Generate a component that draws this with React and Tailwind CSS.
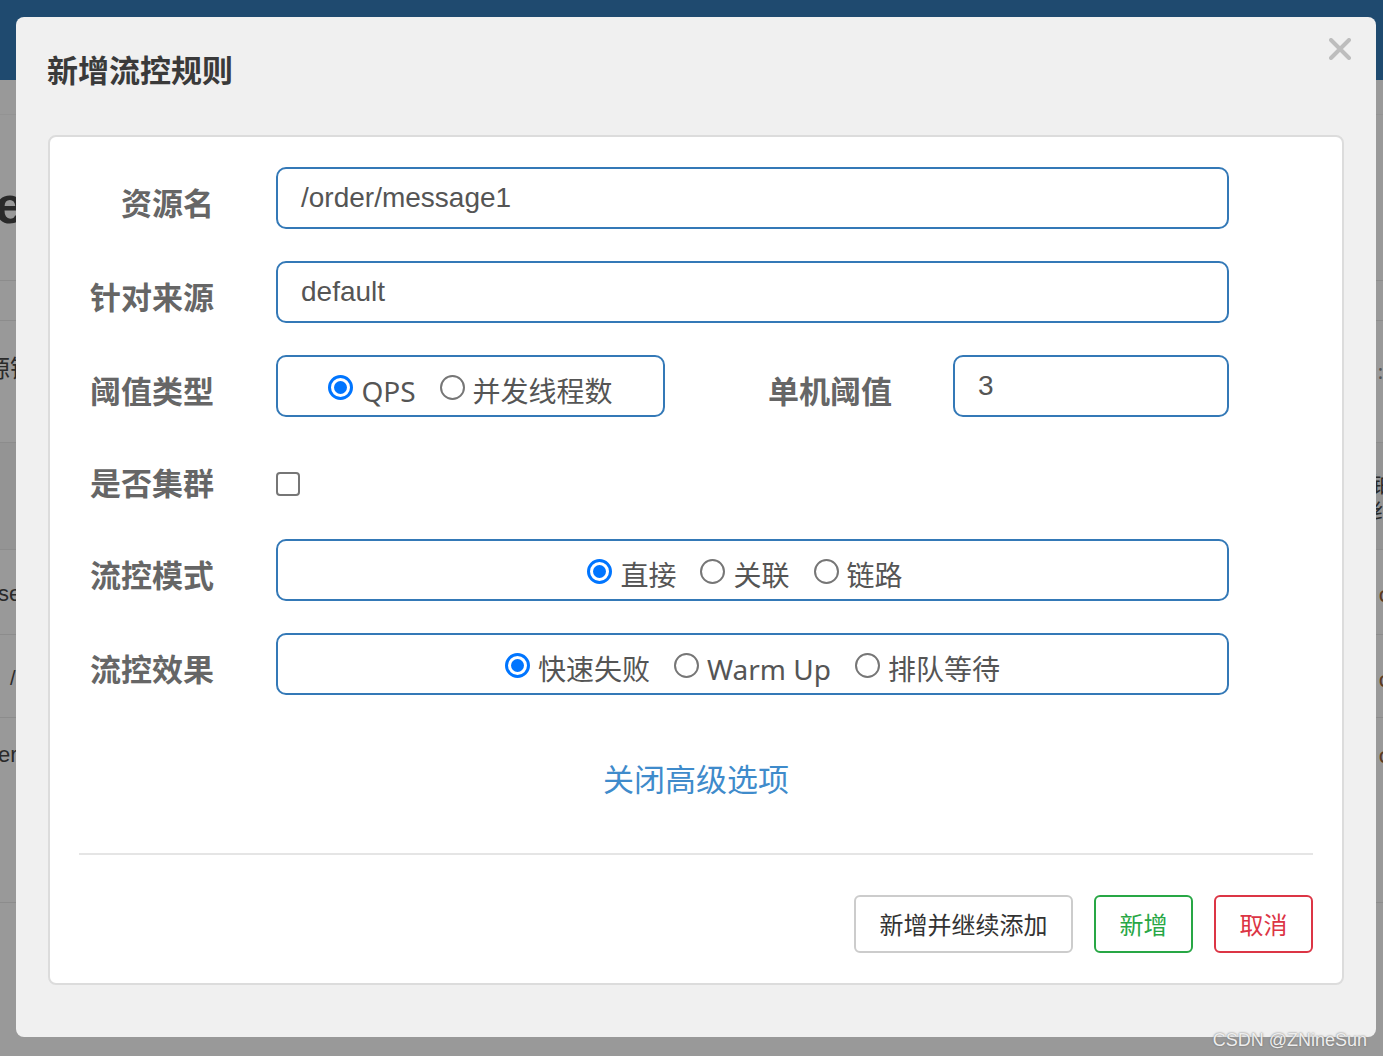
import React from "react"

const cjk = "font-['Noto_Sans_CJK_SC',sans-serif]"

function Radio({ checked, label }) {
    return (
        <span className="flex items-center gap-[8px]">
            {checked ? (
                <span className="flex h-[25px] w-[25px] items-center justify-center rounded-full border-[3px] border-[#0075ff] bg-white">
                    <span className="h-[13px] w-[13px] rounded-full bg-[#0075ff]" />
                </span>
            ) : (
                <span className="h-[25px] w-[25px] rounded-full border-2 border-[#767676] bg-white" />
            )}
            <span className="pt-[7px]">{label}</span>
        </span>
    )
}

function Label({ children }) {
    return (
        <div className={`w-[164px] shrink-0 pt-[6px] text-right text-[31px] font-bold leading-none text-[#666] ${cjk}`}>
            {children}
        </div>
    )
}

function TextBox({ value, width = "w-[953px]" }) {
    return (
        <div className={`flex h-[62px] items-center rounded-[10px] border-2 border-[#3479b7] bg-white px-[23px] text-[28px] text-[#555] font-['Liberation_Sans','Noto_Sans_CJK_SC',sans-serif] ${width}`}>
            {value}
        </div>
    )
}

function RadioBox({ options, width = "w-[953px]", extra = "" }) {
    return (
        <div className={`flex h-[62px] items-center justify-center gap-[24px] rounded-[10px] border-2 border-[#3479b7] bg-white pt-[2px] text-[28px] leading-none text-[#555] font-['Noto_Sans','Noto_Sans_CJK_SC',sans-serif] ${width} ${extra}`}>
            {options.map((o, i) => <Radio key={i} checked={i === 0} label={o} />)}
        </div>
    )
}

function Background() {
    return (
        <div className="flex flex-col text-[#2a2a2a]">
            <div className="h-[80px] bg-[#1f4a6f]" />
            <div className="h-[35px] border-b border-[#939393]" />
            <div className="flex h-[165px] items-center justify-between pt-[14px]">
                <span className="-ml-[5px] text-[52px] font-bold leading-none font-['Liberation_Sans',sans-serif]">e</span>
            </div>
            <div className="h-[41px] border-y border-[#8c8c8c]" />
            <div className="flex h-[122px] items-start justify-between border-b border-[#8c8c8c] pt-[28px]">
                <span className={`-ml-[14px] text-[24px] ${cjk}`}>源锗</span>
                <span className="mt-[8px] text-[20px] text-[#555]">:</span>
            </div>
            <div className="flex h-[107px] items-center justify-end border-b border-[#8c8c8c] bg-[#949494]">
                <span className={`-mr-[10px] text-[22px] leading-tight ${cjk}`}>铂<br />纟</span>
            </div>
            <div className="flex h-[85px] items-center justify-between border-b border-[#8c8c8c] pt-[2px]">
                <span className="-ml-[2px] text-[22px] font-['Liberation_Sans',sans-serif]">se</span>
                <span className="-mr-[6px] text-[22px] text-[#5a3a20]">c</span>
            </div>
            <div className="flex h-[83px] items-center justify-between border-b border-[#8c8c8c] pt-[4px]">
                <span className="ml-[10px] text-[20px] font-['Liberation_Sans',sans-serif]">/</span>
                <span className="-mr-[6px] text-[22px] text-[#5a3a20]">c</span>
            </div>
            <div className="flex h-[185px] items-start justify-between border-b border-[#8c8c8c] pt-[20px]">
                <span className="-ml-[2px] text-[22px] font-['Liberation_Sans',sans-serif]">er</span>
                <span className="-mr-[6px] text-[22px] text-[#5a3a20]">c</span>
            </div>
        </div>
    )
}

export default function App() {
    return (
        <div className="relative h-[1056px] w-[1383px] overflow-hidden bg-[#999]">
            <Background />

            <div className="absolute left-[16px] top-[17px] flex h-[1020px] w-[1360px] flex-col rounded-[8px] bg-[#f0f0f0]">
                <div className="h-[118px] pl-[31px] pt-[35px]">
                    <h1 className={`text-[31px] font-bold leading-[34px] text-[#3a3a3a] ${cjk}`}>新增流控规则</h1>
                </div>
                <button className="absolute right-[25px] top-[21px] h-[22px] w-[22px]">
                    <svg viewBox="0 0 22 22" className="h-[22px] w-[22px]">
                        <path d="M2 2 L20 20 M20 2 L2 20" stroke="#bdbdbd" strokeWidth="4" strokeLinecap="round" />
                    </svg>
                </button>

                <div className="mx-[32px] flex h-[850px] flex-col rounded-[8px] border-2 border-[#dcdcdc] bg-white pt-[30px]">
                    <div className="flex flex-col gap-[32px]">
                        <div className="flex items-center gap-[62px]">
                            <Label>资源名</Label>
                            <TextBox value="/order/message1" />
                        </div>
                        <div className="flex items-center gap-[62px]">
                            <Label>针对来源</Label>
                            <TextBox value="default" />
                        </div>
                        <div className="flex items-center gap-[62px]">
                            <Label>阈值类型</Label>
                            <div className="flex items-center">
                                <RadioBox options={["QPS", "并发线程数"]} width="w-[389px]" />
                                <div className={`ml-[103px] w-[126px] pt-[6px] text-[31px] font-bold leading-none text-[#666] ${cjk}`}>单机阈值</div>
                                <div className="ml-[59px]">
                                    <TextBox value="3" width="w-[276px]" />
                                </div>
                            </div>
                        </div>
                        <div className="flex h-[58px] items-center gap-[62px]">
                            <Label>是否集群</Label>
                            <span className="mt-[12px] h-[24px] w-[24px] rounded-[4px] border-2 border-[#767676] bg-white" />
                        </div>
                        <div className="flex items-center gap-[62px]">
                            <Label>流控模式</Label>
                            <RadioBox options={["直接", "关联", "链路"]} extra="pr-[15px]" />
                        </div>
                        <div className="flex items-center gap-[62px]">
                            <Label>流控效果</Label>
                            <RadioBox options={["快速失败", "Warm Up", "排队等待"]} />
                        </div>
                    </div>

                    <div className={`mt-[63px] h-[40px] text-center text-[31px] leading-[40px] text-[#3f8bcb] ${cjk}`}>关闭高级选项</div>

                    <div className="mx-[29px] mt-[55px] border-t-2 border-[#e5e5e5]" />

                    <div className={`mx-[29px] mt-[40px] flex justify-end gap-[21px] text-[24px] ${cjk}`}>
                        <button className="h-[58px] w-[219px] rounded-[6px] border-2 border-[#cccccc] bg-white text-[#333]">新增并继续添加</button>
                        <button className="h-[58px] w-[99px] rounded-[6px] border-2 border-[#28a745] bg-white text-[#28a745]">新增</button>
                        <button className="h-[58px] w-[99px] rounded-[6px] border-2 border-[#dc3545] bg-white text-[#dc3545]">取消</button>
                    </div>
                </div>
            </div>

            <div className="absolute right-[16px] top-[1027px] text-[18px] text-[#eeeeee] [text-shadow:0_0_2px_#666] font-['Liberation_Sans',sans-serif]">
                CSDN @ZNineSun
            </div>
        </div>
    )
}
